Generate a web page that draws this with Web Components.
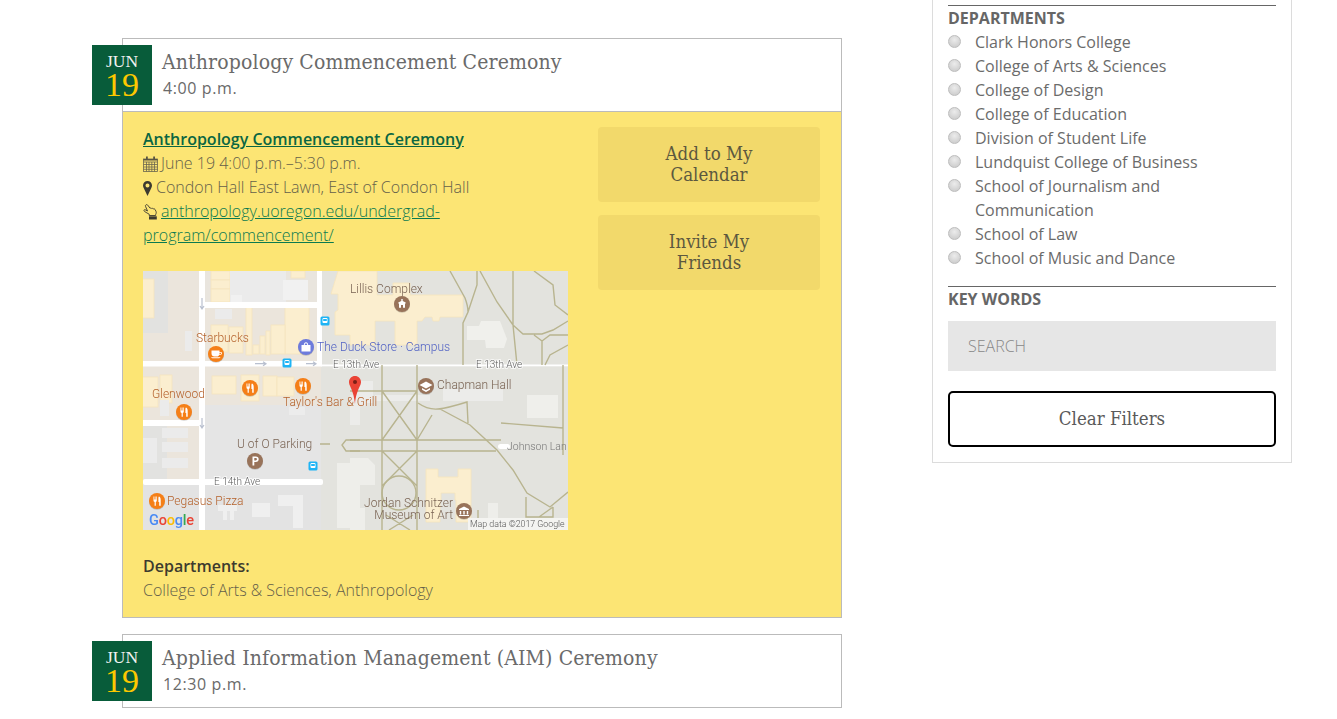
<!DOCTYPE html>
<html lang="en">
<head>
<meta charset="utf-8">
<title>Commencement Ceremonies</title>
<style>
  html, body { margin: 0; background: #fff; }
  body { font-family: "Open Sans", "Liberation Sans", sans-serif; overflow: hidden; height: 719px; }
</style>
</head>
<body>
<page-shell>
  <div slot="main">
    <event-item month="JUN" day="19" name="Anthropology Commencement Ceremony" time="4:00 p.m.">
      <event-detail></event-detail>
    </event-item>
    <event-item month="JUN" day="19" name="Applied Information Management (AIM) Ceremony" time="12:30 p.m."></event-item>
  </div>
  <filter-panel slot="side"></filter-panel>
</page-shell>

<script>
// small helper, every component gets an open shadow root from a string
function shadow(el, html) {
  el.attachShadow({ mode: 'open' }).innerHTML = html;
}

const SLAB = '"DejaVu Serif Condensed", "DejaVu Serif", "Liberation Serif", serif';

class PageShell extends HTMLElement {
  constructor() {
    super();
    shadow(this, `
      <style>
        :host { display: grid; grid-template-columns: 932px 360px; }
        .main { padding: 38px 0 0 122px; width: 720px; }
      </style>
      <div class="main"><slot name="main"></slot></div>
      <div><slot name="side"></slot></div>
    `);
  }
}

class EventItem extends HTMLElement {
  constructor() {
    super();
    const a = (n) => this.getAttribute(n);
    shadow(this, `
      <style>
        :host { display: block; position: relative; border: 1px solid #bbb; margin-bottom: 16px; background: #fff; }
        .date {
          position: absolute; left: -31px; top: 6px; width: 60px; height: 60px;
          background: #085c3a; text-align: center; font-family: "Liberation Serif", serif;
        }
        .month { color: #f2f2f2; font-size: 17.5px; line-height: 18px; padding-top: 7px; }
        .day { color: #fdc800; font-size: 34px; line-height: 29px; }
        header { height: 72px; box-sizing: border-box; padding: 11px 0 0 39px; }
        h2 { margin: 0; font: 400 21px/24px ${SLAB}; color: #6a6a6a; white-space: nowrap; letter-spacing: .13px; }
        .time { font-size: 16px; line-height: 24px; margin: 2px 0 0 1px; color: #6a6a6a; letter-spacing: .6px; }
      </style>
      <div class="date">
        <div class="month">${a('month')}</div>
        <div class="day">${a('day')}</div>
      </div>
      <header>
        <h2>${a('name')}</h2>
        <div class="time">${a('time')}</div>
      </header>
      <slot></slot>
    `);
  }
}

class EventDetail extends HTMLElement {
  constructor() {
    super();
    shadow(this, `
      <style>
        :host {
          display: grid; grid-template-columns: 425px 222px; column-gap: 30px;
          border-top: 1px solid #bbb; background: #fce574; padding: 15px 21px 15px 20px;
          font-size: 16px; line-height: 24px; font-weight: 300; color: #64604a;
        }
        a { color: #0a7a50; }
        a.title { display: block; color: #0a6642; font-weight: 600; }
        .line svg { vertical-align: -3px; }
        campus-map { margin: 24px 0; }
        b { display: block; font-weight: 600; color: #3d3b2e; }
        .actions { display: flex; flex-direction: column; gap: 13px; }
      </style>
      <div>
        <a class="title" href="#">Anthropology Commencement Ceremony</a>
        <div class="line">
          <svg width="15" height="16" viewBox="0 0 15 16" style="margin-right:3px">
            <g fill="none" stroke="#6a664f" stroke-width=".8">
              <rect x=".5" y="3" width="14" height="12.500"/>
              <path d="M.5 6h14M.5 8.500h14M.5 11h14M.5 13.300h14M3.500 6v9.500M6 6v9.500M8.800 6v9.500M11.500 6v9.500"/>
            </g>
            <path fill="#5a5642" d="M3 .5h1.800V4.500H3zM10.200 .5H12V4.500h-1.800zM.5 3h14v1.500H.5z"/>
          </svg>June 19 4:00 p.m.–5:30 p.m.
        </div>
        <div class="line">
          <svg width="9" height="15" viewBox="0 0 9 15" style="margin-right:4px">
            <path fill="#3c3a30" fill-rule="evenodd" d="M4.500 0C2 0 0 2 0 4.500c0 1 .3 1.800.7 2.600L4.500 15l3.800-7.900c.4-.8.7-1.600.7-2.600C9 2 7 0 4.500 0zm0 2.500a2 2 0 1 1 0 4 2 2 0 0 1 0-4z"/>
          </svg>Condon Hall East Lawn, East of Condon Hall
        </div>
        <div class="line">
          <svg width="15" height="16" viewBox="0 0 15 16" style="margin-right:3px">
            <path fill="none" stroke="#3c3a30" stroke-width=".9" stroke-linejoin="round" d="M3 .8c.8-.5 1.500 0 2 .7l2 2.700c.7-.4 1.300-.2 1.700.3.600-.3 1.200-.2 1.600.3.700-.2 1.300 0 1.700.6l1 2c.4 1 .3 2-.3 2.900v1.200H6.200v-1.300L3 8.400c-.7-.6-1.800-1-2.100-1.700-.2-.7.500-1.200 1.200-1l2.400 1.300L2.500 2.300c-.3-.5 0-1.100.5-1.500z"/>
            <path fill="#3c3a30" d="M6 12.300h7.800v3.200H6z"/>
          </svg><a href="#">anthropology.uoregon.edu/undergrad-program/commencement/</a>
        </div>
        <campus-map></campus-map>
        <b>Departments:</b>
        College of Arts &amp; Sciences, Anthropology
      </div>
      <div class="actions">
        <soft-button>Add to My<br>Calendar</soft-button>
        <soft-button>Invite My<br>Friends</soft-button>
      </div>
    `);
  }
}

class SoftButton extends HTMLElement {
  constructor() {
    super();
    shadow(this, `
      <style>
        :host {
          display: flex; align-items: center; justify-content: center; height: 75px;
          box-sizing: border-box; padding-bottom: 2px;
          background: #f2d96b; border-radius: 4px; text-align: center;
          font: 400 18.500px/21px ${SLAB}; color: #5c583f;
        }
      </style>
      <slot></slot>
    `);
  }
}

class FilterRadio extends HTMLElement {
  constructor() {
    super();
    shadow(this, `
      <style>
        :host { display: flex; font-size: 16px; line-height: 24px; color: #6b6b6b; }
        i {
          flex: none; width: 13px; height: 13px; margin: 5px 14px 0 0; box-sizing: border-box; border-radius: 50%;
          border: 1px solid #bdbdbd; background: radial-gradient(circle at 50% 35%, #ececec, #c6c6c6);
        }
        span { width: 301px; }
      </style>
      <i></i><span><slot></slot></span>
    `);
  }
}

class FilterPanel extends HTMLElement {
  constructor() {
    super();
    const depts = ['Clark Honors College', 'College of Arts &amp; Sciences', 'College of Design', 'College of Education',
      'Division of Student Life', 'Lundquist College of Business', 'School of Journalism and Communication',
      'School of Law', 'School of Music and Dance'];
    shadow(this, `
      <style>
        :host {
          display: block; box-sizing: border-box; width: 360px; padding: 5px 15px 15px;
          border: 1px solid #dcdcdc; border-top: 0; background: #fff;
        }
        h3 { margin: 0; border-top: 1px solid #666; font-size: 16px; line-height: 24px; font-weight: 700; color: #666; }
        h3.keys { margin-top: 16px; }
        .search {
          margin-top: 10px; height: 50px; background: #e6e6e6; box-sizing: border-box; padding-left: 20px;
          display: flex; align-items: center; font-size: 16px; font-weight: 300; color: #888;
        }
        .clear {
          margin-top: 20px; height: 56px; box-sizing: border-box; border: 2px solid #000; border-radius: 5px; padding-bottom: 2px;
          display: flex; align-items: center; justify-content: center;
          font: 400 18.500px/21px ${SLAB}; color: #5a5a5a;
        }
      </style>
      <h3>DEPARTMENTS</h3>
      ${depts.map((d) => `<filter-radio>${d}</filter-radio>`).join('')}
      <h3 class="keys">KEY WORDS</h3>
      <div class="search">SEARCH</div>
      <div class="clear">Clear Filters</div>
    `);
  }
}

// map picture, everything on it sits at its own place on the canvas
class CampusMap extends HTMLElement {
  constructor() {
    super();
    const cream = (x, y, w, h) => `<rect class="b" x="${x}" y="${y}" width="${w}" height="${h}"/>`;
    const pale = (x, y, w, h) => `<rect fill="#efefeb" x="${x}" y="${y}" width="${w}" height="${h}"/>`;
    const grey = (x, y, w, h) => `<rect fill="#ebebeb" x="${x}" y="${y}" width="${w}" height="${h}"/>`;
    const pin = (id, x, y, c) => `<circle cx="${x}" cy="${y + .8}" r="8" fill="#000" opacity=".18"/><circle cx="${x}" cy="${y}" r="8" fill="${c}"/><use href="#${id}" x="${x - 8}" y="${y - 8}"/>`;
    const bus = (x, y) => `<rect x="${x - 4.500}" y="${y - 4.500}" width="9" height="9" rx="1.500" fill="#1eb4f5"/><rect x="${x - 2.500}" y="${y - 3}" width="5" height="5" rx="1" fill="#fff"/><rect x="${x - 1.800}" y="${y - 2}" width="3.600" height="2" fill="#1eb4f5"/>`;
    const ORANGE = '#f57f17', BROWN = '#98735a';
    shadow(this, `
      <style>
        :host { display: block; width: 425px; height: 259px; overflow: hidden; }
        svg { display: block; filter: blur(.45px); }
        text { font-family: Roboto, "Liberation Sans", sans-serif; font-size: 12px; }
        .b { fill: #fbeecf; stroke: #f6e4bd; stroke-width: .8; }
        .r { fill: #fff; }
        .p { fill: none; stroke: #b8b48f; stroke-width: 1.400; }
        .o { fill: #b5622c; }
        .n { fill: #7a6454; }
        .g { fill: #5c5c5c; paint-order: stroke; stroke: #fff; stroke-width: 2px; stroke-opacity: .7; font-size: 10px; }
        .arrow { fill: none; stroke: #b9c0cf; stroke-width: 1.200; }
      </style>
      <svg width="425" height="259" viewBox="0 0 425 259">
        <defs>
          <symbol id="fork" viewBox="0 0 16 16" width="16" height="16">
            <path fill="#fff" d="M4.500 3.500h.7v3h.6v-3h.7v3h.6v-3h.7v4.200c0 .7-.5 1.100-1 1.300V12.800H5.600V9c-.6-.2-1.100-.6-1.100-1.300zM10 3.500c1.200.3 1.700 1.800 1.700 3.500v5.800h-1.500V9H9.400V5.500c0-1.100.2-1.700.6-2z"/>
          </symbol>
          <symbol id="cup" viewBox="0 0 16 16" width="16" height="16">
            <path fill="#fff" d="M3.500 4.500h8V6h1.300c.8 0 1.200.6 1.200 1.300s-.5 1.400-1.300 1.400h-1.400c-.4 1.200-1.300 1.800-2.300 1.800H6.200c-1.400 0-2.700-1.200-2.700-3zm8 2.300v1.100h1.200c.3 0 .5-.3.500-.6s-.2-.5-.5-.5zM3 11.300h9.500c-.5.800-1 1-2 1H5c-1 0-1.500-.2-2-1z"/>
          </symbol>
          <symbol id="park" viewBox="0 0 16 16" width="16" height="16">
            <path fill="#fff" fill-rule="evenodd" d="M5.500 3.500h3.300c1.800 0 2.900 1.100 2.900 2.700S10.600 9 8.800 9H7.300v3.500H5.500zm1.800 1.600v2.300h1.400c.8 0 1.200-.5 1.200-1.200s-.4-1.100-1.200-1.100z"/>
          </symbol>
          <symbol id="school" viewBox="0 0 16 16" width="16" height="16">
            <path fill="#fff" d="M8 3.500 14.500 7 8 10.500 1.500 7zM4 10l4 2.200 4-2.200v1.800L8 14l-4-2.200z"/>
          </symbol>
          <symbol id="bag" viewBox="0 0 16 16" width="16" height="16">
            <path fill="#fff" fill-rule="evenodd" d="M3.500 6h2.300c0-1.500.9-2.700 2.200-2.700s2.200 1.200 2.200 2.700h2.300v6.500h-9zm3.300 0h2.400c0-1-.5-1.700-1.200-1.700S6.800 5 6.800 6z"/>
          </symbol>
          <symbol id="tower" viewBox="0 0 16 16" width="16" height="16">
            <path fill="#fff" fill-rule="evenodd" d="M7.300 3h1.400v2l3 1.500v1H11v4.200H5V7.500h-.7v-1L7.300 5zM7 9v2.700h2V9z"/>
          </symbol>
          <symbol id="museum" viewBox="0 0 16 16" width="16" height="16">
            <path fill="#fff" fill-rule="evenodd" d="M8 3.500 13 6v1H3V6zM3.800 8h1.400v3.500H3.800zm3.500 0h1.400v3.500H7.300zm3.500 0h1.400v3.500h-1.400zM3 12h10v1H3z"/>
          </symbol>
        </defs>

        <!-- ground -->
        <rect width="425" height="259" fill="#e3e3de"/>
        <rect width="178" height="259" fill="#ebe5dc"/>
        <rect x="0" y="0" width="25" height="62" fill="#e2e2e0"/>
        <rect x="60" y="134" width="118" height="76" fill="#e5e5e5"/>
        <rect x="0" y="212" width="178" height="47" fill="#e3e3e3"/>
        <rect x="0" y="152" width="24" height="60" fill="#e2e2e0"/>
        <rect x="62" y="0" width="114" height="31" fill="#e9e5de"/>

        <!-- west blocks -->
        ${cream(-2, 8, 13, 39)}
        ${cream(68, 0, 19, 9)}${cream(68, 9, 19, 9)}${cream(68, 18, 19, 13)}
        ${grey(87, 0, 56, 31)}${cream(148, 0, 14, 7)}
        <rect x="140" y="9" width="25" height="20" fill="#f1f1f1"/>
        <rect x="88" y="24" width="11" height="7" fill="#f1f1f1"/>
        ${grey(72, 38, 17, 10)}${grey(42, 60, 7, 20)}
        ${cream(103, 36, 6, 48)}${cream(142, 36, 24, 47)}${cream(128, 54, 14, 29)}${cream(123, 60, 4, 24)}
        ${cream(117, 65, 5, 18)}${cream(110, 74, 6, 9)}${cream(68, 54, 17, 27)}${cream(86, 56, 14, 26)}
        ${cream(-2, 106, 17, 30)}${cream(17, 104, 12, 28)}${cream(69, 105, 24, 18)}${cream(98, 104, 18, 26)}
        ${cream(120, 105, 14, 20)}${cream(134, 106, 17, 19)}
        ${grey(17, 129, 9, 16)}

        <!-- pale west shapes -->
        ${grey(19, 157, 26, 10)}${grey(19, 171, 26, 10)}${grey(19, 187, 26, 10)}${grey(0, 167, 14, 25)}
        <path fill="#efefef" d="M135 224h25v33h-10v-22h-15zM109 232h18v14h-18zM75 234h19v6h-3v9h-4v-9h-3v9h-4v-9h-5z"/>
        <rect x="146" y="136" width="16" height="8" fill="#ececec"/>

        <!-- roads west -->
        <rect class="r" x="56" y="0" width="6" height="259"/>
        <rect class="r" x="174" y="0" width="5" height="95"/>
        <rect class="r" x="62" y="31" width="113" height="6"/>
        <rect class="r" x="0" y="90" width="179" height="5.500"/>
        <rect class="r" x="0" y="149" width="60" height="6"/>
        <rect class="r" x="0" y="208" width="180" height="6" rx="2"/>
        <rect class="r" x="178" y="93.500" width="247" height="1.800"/>
        <path class="arrow" d="M112 92.700h11m-3-2 3 2-3 2M163 92.700h10m-3-2 3 2-3 2M59 27v11m-2-3 2 3 2-3M59 147v10m-2-3 2 3 2-3"/>

        <!-- Lillis complex -->
        <path class="b" d="M195 0h39v24h16v-12h17v12h53v22h-23l-1 4h-6l-1-4h-7l-3 4h-5v24h-22v-24h-20v24h-25v-10h-15v-23l3-2v-16h-7z"/>

        <!-- east campus -->
        <path fill="#f0f0ec" d="M324 55h12l2-5h19l7 18-3 9h-18l-1-8h-18z"/>
        ${pale(384, 124, 31, 23)}
        <path fill="#ececea" d="M214 110h16v22h-6v3h-7l-3-3zM207 124h10v30h-10zM232 124h55v6h-55zM300 118h60v12h-60z"/>
        <path fill="#eeeeea" d="M207 187h18l7 7v20h-25zM207 237h15v22h-15zM345 232h10v18h-10zM194 192h23v65h-23z"/>
        <path class="b" d="M283 198h12v8h20v-8h13v53h-15v-22h-1v-7h-14v7h-1v22h-14z"/>

        <!-- paths -->
        <path class="p" d="M307 0 322 27q3 8 3 14l-5 11v42M334 0v14l-9 27M337 0l17 31 16 23 10 9h19l11-4 15-9M370 0v54l4 40M391 0l19 14 2 20 13 10M399 70v24M399 70l-8-6M399 70l8-6h18M402 94l5-10 18-10"/>
        <path class="p" d="M239 94v165M274 94v165M207 120h67M239 120l35 49M274 120l-35 49M207 169h151M207 180h146M239 180l35 35M274 180l-35 35M243 244l24 15M270 244l-24 15"/>
        <circle class="p" cx="256" cy="222" r="17"/>
        <path class="p" d="M275 132q10 7 20 6t29-7l1 21M297 138l30 16 27 25 16 20 14 23 23 14 18-15M289 144l-15 25M358 152l62 5M420 94v90M383 226v20h27v-10M396 246l14-10M335 239v12M177 173h10"/>
        <path class="p" d="M217 169h-14l-4 5 4 6h14"/>

        <!-- pins -->
        ${pin('tower', 259, 33, BROWN)}
        ${pin('cup', 73, 83, ORANGE)}
        ${pin('bag', 163, 76, '#6d7bdc')}
        ${pin('fork', 107, 117, ORANGE)}
        ${pin('fork', 160, 115, ORANGE)}
        ${pin('fork', 41, 141, ORANGE)}
        ${pin('fork', 14, 230, ORANGE)}
        ${pin('park', 112, 190, BROWN)}
        ${pin('school', 283, 115, BROWN)}
        ${pin('museum', 321, 240, BROWN)}
        ${bus(182, 50)}${bus(144, 92)}${bus(170, 195)}
        <rect x="355" y="173" width="12" height="5" rx="2.500" fill="#fff"/>

        <!-- labels -->
        <text class="n" x="207" y="21.500">Lillis Complex</text>
        <text class="o" x="53" y="71">Starbucks</text>
        <text x="174" y="80" fill="#5162c4">The Duck Store · Campus</text>
        <text class="g" x="190" y="97">E 13th Ave</text>
        <text class="g" x="333" y="97">E 13th Ave</text>
        <text class="n" x="294" y="118">Chapman Hall</text>
        <text class="o" x="9" y="127">Glenwood</text>
        <text class="o" x="140" y="135">Taylor's Bar &amp; Grill</text>
        <text class="n" x="94" y="177">U of O Parking</text>
        <text class="g" x="71" y="214">E 14th Ave</text>
        <text class="o" x="24" y="234">Pegasus Pizza</text>
        <text class="n" x="310" y="236" text-anchor="end">Jordan Schnitzer</text>
        <text class="n" x="310" y="248" text-anchor="end">Museum of Art</text>
        <text x="364" y="179" fill="#777" style="font-size:10.500px">Johnson Lan</text>

        <!-- red marker -->
        <path fill="#ea4335" d="M212 105c-3.400 0-6 2.700-6 6 0 4.500 4.500 7 6 22 1.500-15 6-17.500 6-22 0-3.300-2.600-6-6-6z"/>
        <circle cx="212" cy="111" r="2" fill="#7a1f17"/>

        <!-- google and attribution -->
        <text x="6" y="254" style="font-size:14.500px;font-weight:500;letter-spacing:-.2px"><tspan fill="#4a8af4">G</tspan><tspan fill="#ea4335">o</tspan><tspan fill="#fbbc05">o</tspan><tspan fill="#4a8af4">g</tspan><tspan fill="#34a853">l</tspan><tspan fill="#ea4335">e</tspan></text>
        <rect x="325" y="247" width="100" height="12" fill="#f4f4f1"/>
        <text x="327" y="256" fill="#555" style="font-size:8.800px">Map data ©2017 Google</text>
      </svg>
    `);
  }
}

customElements.define('page-shell', PageShell);
customElements.define('event-item', EventItem);
customElements.define('event-detail', EventDetail);
customElements.define('soft-button', SoftButton);
customElements.define('filter-radio', FilterRadio);
customElements.define('filter-panel', FilterPanel);
customElements.define('campus-map', CampusMap);
</script>
</body>
</html>
